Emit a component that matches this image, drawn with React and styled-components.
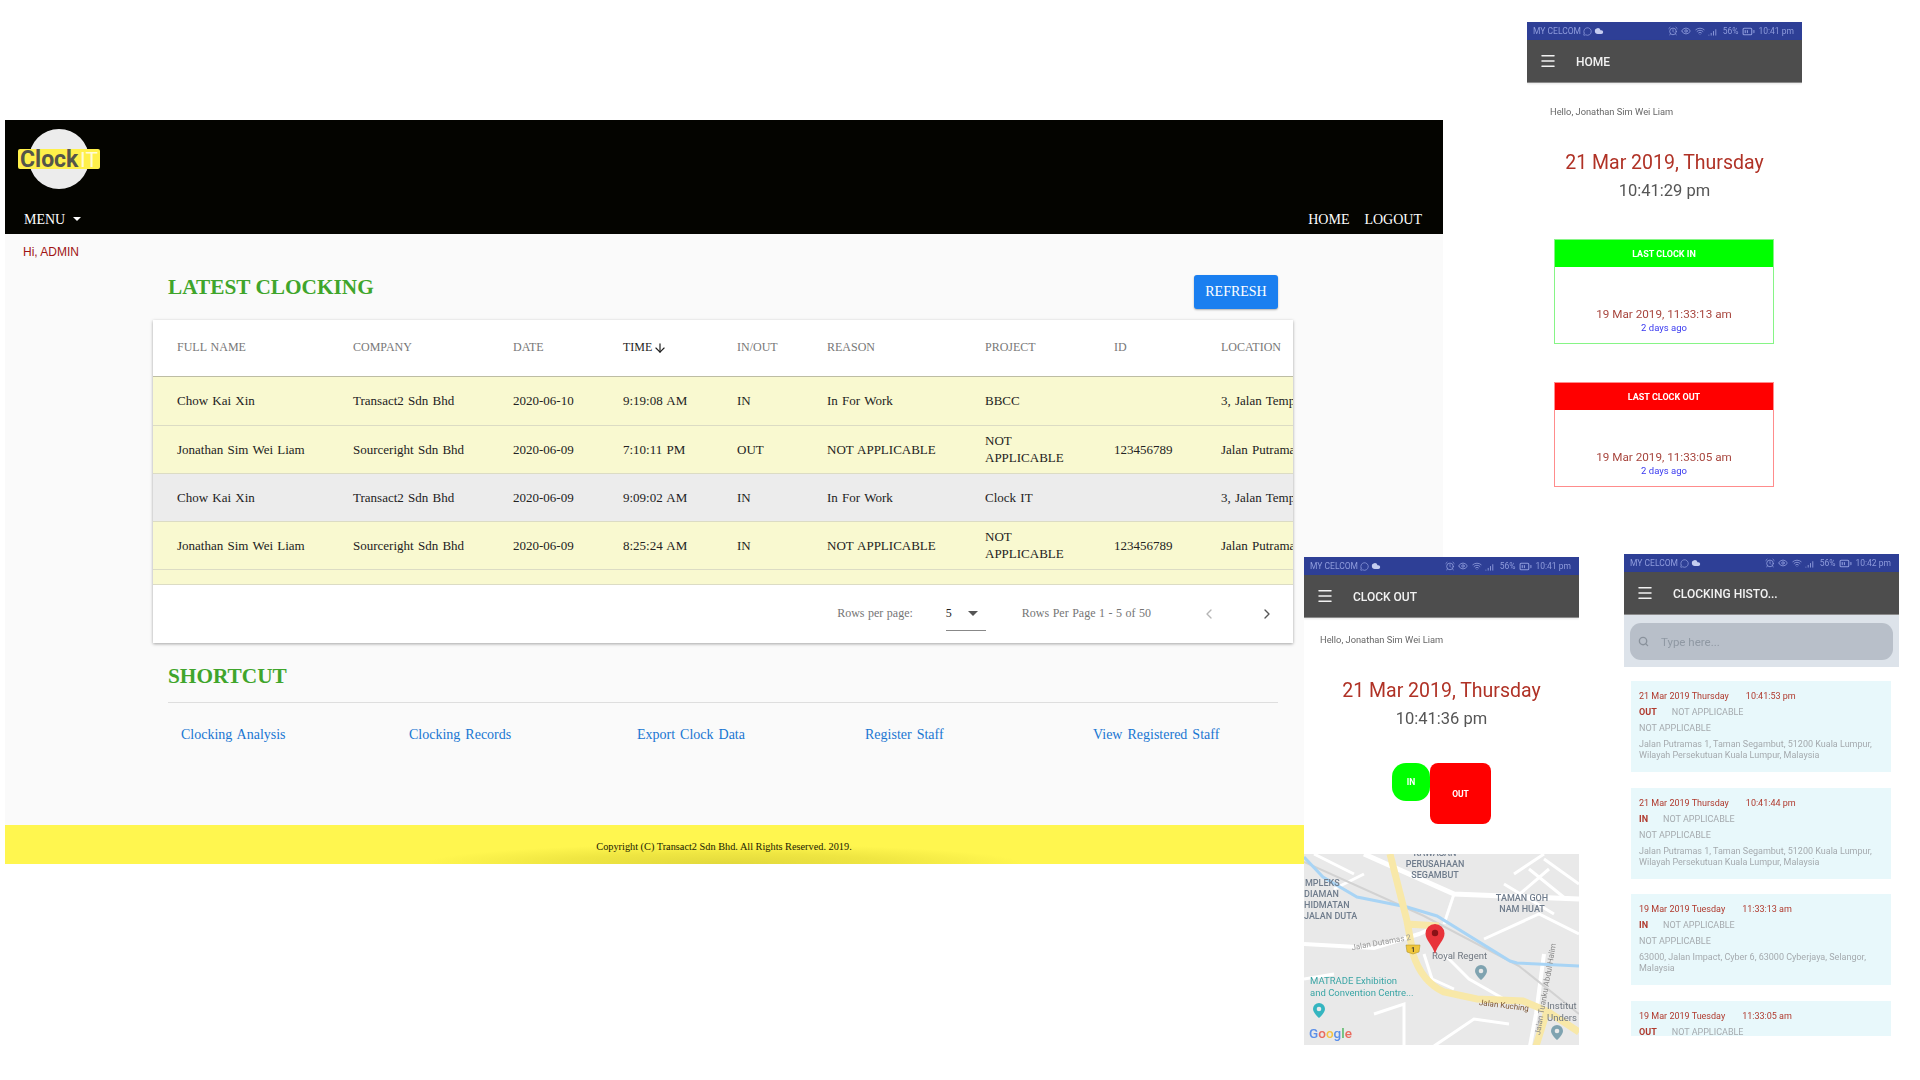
import React from "react";
import styled, { createGlobalStyle } from "styled-components";
import {
  AlarmClock,
  ArrowDown,
  BatteryMedium,
  ChevronLeft,
  ChevronRight,
  Cloud,
  Eye,
  Menu,
  MessageCircle,
  Search,
  SignalHigh,
  Wifi,
} from "lucide-react";

const GlobalStyle = createGlobalStyle`
  html, body {
    margin: 0;
    padding: 0;
    background: #fff;
  }
  body {
    width: 1920px;
    height: 1080px;
    overflow: hidden;
    font-family: "Liberation Serif", serif;
  }
`;

const Page = styled.div`
  position: relative;
  width: 1920px;
  height: 1080px;
  padding: 120px 0 0 5px;
  box-sizing: border-box;
  overflow: hidden;
`;
const Desktop = styled.div`
  width: 1438px;
`;
const Header = styled.header`
  height: 114px;
  background: #040400;
  color: #fff;
  display: flex;
  flex-direction: column;
  justify-content: space-between;
  box-sizing: border-box;
  padding: 9px 0 6px 13px;
`;
const NavRow = styled.nav`
  display: flex;
  justify-content: space-between;
  align-items: center;
  font-size: 14px;
  line-height: 16px;
  padding: 0 21px 0 6px;
`;
const MenuLabel = styled.span`
  display: flex;
  align-items: center;
  gap: 8px;
  &::after {
    content: "";
    border-left: 4px solid transparent;
    border-right: 4px solid transparent;
    border-top: 4px solid #fff;
    margin-top: -2px;
  }
`;
const NavLinks = styled.div`
  display: flex;
  gap: 15px;
`;
const Main = styled.main`
  height: 630px;
  background: #fafafa;
  box-sizing: border-box;
  padding-top: 11px;
  display: flex;
  flex-direction: column;
`;
const Greeting = styled.div`
  font: 12px/14px "Liberation Sans", sans-serif;
  color: #a01414;
  padding-left: 18px;
`;
const Content = styled.div`
  width: 1140px;
  margin: 16px 0 0 148px;
`;
const TitleRow = styled.div`
  display: flex;
  justify-content: space-between;
  align-items: flex-start;
  padding: 0 15px;
`;
const SectionTitle = styled.h2`
  margin: 0;
  font-size: 21.3px;
  line-height: 24px;
  font-weight: bold;
  color: #3fa52b;
`;
const RefreshButton = styled.button`
  width: 84px;
  height: 34px;
  border: none;
  border-radius: 3px;
  background: #1a7ff0;
  color: #fff;
  font: 14px "Liberation Serif", serif;
  box-shadow: 0 1px 2px rgba(0, 0, 0, 0.3);
`;
const TableCard = styled.section`
  margin-top: 11px;
  background: #fff;
  box-shadow: 0 1px 3px rgba(0, 0, 0, 0.35);
  overflow: hidden;
  word-spacing: 1px;
`;
const Table = styled.table`
  table-layout: fixed;
  width: 1300px;
  border-collapse: collapse;
`;
const HeadCell = styled.th`
  height: 56px;
  padding: 0 0 0 23px;
  text-align: left;
  font-size: 12px;
  font-weight: normal;
  color: ${(p) => (p.$active ? "#1d1d1d" : "#777")};
  border-bottom: 1px solid #bdbda4;
  white-space: nowrap;
  box-sizing: border-box;
  &:first-child {
    padding-left: 24px;
  }
`;
const SortWrap = styled.span`
  display: inline-flex;
  align-items: center;
  gap: 1px;
`;
const Row = styled.tr`
  height: ${(p) => p.$h}px;
  background: ${(p) => (p.$grey ? "#ececec" : "#f9f9d0")};
`;
const Cell = styled.td`
  padding: 0 24px 0 23px;
  font-size: 13px;
  line-height: 17px;
  color: #222;
  border-bottom: 1px solid #dcdcc4;
  white-space: ${(p) => (p.$wrap ? "normal" : "nowrap")};
  overflow: hidden;
  box-sizing: border-box;
  &:first-child {
    padding-left: 24px;
  }
`;
const EmptyCell = styled.td`
  padding: 0;
  border-bottom: 1px solid #dcdcc4;
`;
const Pager = styled.div`
  height: 58px;
  display: flex;
  align-items: center;
  justify-content: flex-end;
  padding: 0 18px 0 0;
  font-size: 12px;
  word-spacing: 0.5px;
  color: #757575;
`;
const PagerSelect = styled.div`
  width: 40px;
  height: 34px;
  margin: 0 36px 0 33px;
  box-sizing: border-box;
  border-bottom: 1px solid #888;
  display: flex;
  align-items: center;
  justify-content: space-between;
  padding: 0 8px 0 0;
  color: #222;
  &::after {
    content: "";
    border-left: 5px solid transparent;
    border-right: 5px solid transparent;
    border-top: 5px solid #555;
  }
`;
const PagerButton = styled.span`
  display: flex;
  margin-left: ${(p) => p.$gap}px;
  color: ${(p) => (p.$off ? "#b5b5b5" : "#555")};
`;
const ShortcutTitle = styled(SectionTitle)`
  margin-top: 20px;
  padding: 1px 15px;
`;
const Rule = styled.div`
  height: 1px;
  margin: 13px 15px 0;
  background: #dedede;
`;
const Shortcuts = styled.div`
  display: grid;
  grid-template-columns: repeat(5, 228px);
  margin: 23px 0 0 15px;
  word-spacing: 1.5px;
`;
const ShortcutLink = styled.a`
  padding-left: 13px;
  font-size: 14px;
  line-height: 18px;
  color: #1976d2;
`;
const Footer = styled.footer`
  height: 39px;
  flex: none;
  margin-top: auto;
  background: radial-gradient(ellipse 300px 20px at 50% 100%, #e2d93c 0%, #efe642 55%, #fff64f 100%);
  display: flex;
  align-items: center;
  justify-content: center;
  padding-top: 4px;
  box-sizing: border-box;
  font-size: 10.3px;
  color: #1a1a00;
`;

// phone screenshots sit on the page like loose windows
const Phone = styled.div`
  position: absolute;
  left: ${(p) => p.$x}px;
  top: ${(p) => p.$y}px;
  width: 275px;
  height: ${(p) => p.$h}px;
  background: #fff;
  overflow: hidden;
  font-family: Roboto, sans-serif;
  display: flex;
  flex-direction: column;
  filter: blur(0.4px);
`;
const StatusBar = styled.div`
  height: 18px;
  flex: none;
  background: #2e3f96;
  color: #8f9cdc;
  font-size: 8.5px;
  display: flex;
  align-items: center;
  justify-content: space-between;
  padding: 0 8px 0 6px;
`;
const StatusGroup = styled.span`
  display: flex;
  align-items: center;
  gap: ${(p) => p.$gap || 2}px;
  white-space: nowrap;
`;
const AppBar = styled.div`
  height: 42px;
  flex: none;
  background: #4d4d4d;
  border-bottom: 1px solid #8a8a8a;
  box-shadow: 0 1px 2px rgba(0, 0, 0, 0.1);
  color: #f2f2f2;
  display: flex;
  align-items: center;
  gap: 19px;
  padding-left: 12px;
  font-size: 12px;
  font-weight: 500;
`;
const BarTitle = styled.span`
  margin-top: 2px;
`;
const Hello = styled.div`
  margin: ${(p) => p.$top}px 0 0 ${(p) => p.$left}px;
  font-size: 9.3px;
  line-height: 12px;
  color: #666;
`;
const DateLine = styled.div`
  margin-top: 32px;
  text-align: center;
  font-size: 19.5px;
  line-height: 26px;
  color: #b03226;
`;
const TimeLine = styled.div`
  margin-top: 3px;
  text-align: center;
  font-size: 16.5px;
  line-height: 24px;
  color: #555;
`;
const LastCard = styled.div`
  width: 220px;
  height: 105px;
  margin: ${(p) => p.$top}px 0 0 27px;
  box-sizing: border-box;
  border: 1px solid ${(p) => (p.$in ? "#86f586" : "#ff8c8c")};
  display: flex;
  flex-direction: column;
  align-items: center;
  padding-bottom: 9px;
`;
const LastCardHead = styled.div`
  width: 100%;
  height: 27px;
  flex: none;
  background: ${(p) => (p.$in ? "#00ff00" : "#ff0000")};
  color: #fff;
  font-size: 9px;
  font-weight: 700;
  display: flex;
  align-items: center;
  justify-content: center;
`;
const LastCardDate = styled.div`
  margin-top: auto;
  font-size: 11.7px;
  line-height: 14px;
  color: #a8463e;
`;
const LastCardAgo = styled.div`
  font-size: 9.5px;
  line-height: 13px;
  color: #3a3af0;
`;
const ClockButtons = styled.div`
  margin: 32px 0 0 88px;
  display: flex;
  align-items: flex-start;
`;
const ClockButton = styled.div`
  width: ${(p) => (p.$in ? 38 : 61)}px;
  height: ${(p) => (p.$in ? 38 : 61)}px;
  border-radius: ${(p) => (p.$in ? 14 : 8)}px;
  background: ${(p) => (p.$in ? "#00ff00" : "#ff0000")};
  color: #fff;
  font-size: 8.5px;
  font-weight: 700;
  display: flex;
  align-items: center;
  justify-content: center;
`;
const MapBox = styled.svg`
  display: block;
  margin-top: 30px;
  flex: none;
`;
const SearchBand = styled.div`
  height: 52px;
  flex: none;
  background: #dde3ea;
  box-sizing: border-box;
  padding: 8px 6px 7px;
`;
const SearchBox = styled.div`
  height: 37px;
  border-radius: 11px;
  background: #b8bfc9;
  color: #8f98a3;
  display: flex;
  align-items: center;
  gap: 12px;
  padding-left: 8px;
  font-size: 11.5px;
`;
const HistoryList = styled.div`
  display: flex;
  flex-direction: column;
  gap: 15.5px;
  margin: 14px 8px 0 7px;
`;
const HistoryCard = styled.div`
  height: 91px;
  flex: none;
  box-sizing: border-box;
  padding: 7px 8px 0;
  background: #e8f8fb;
  font-size: 9px;
  line-height: 16px;
  color: #a5aaae;
`;
const HistoryDate = styled.div`
  display: flex;
  gap: 17px;
  color: #b03a2e;
`;
const HistoryType = styled.div`
  display: flex;
  gap: 15px;
  b {
    color: #b03a2e;
    font-weight: 700;
  }
`;
const HistoryAddress = styled.div`
  margin-top: 3px;
  line-height: 11px;
`;

const columns = [177, 160, 110, 114, 90, 158, 129, 107, 255];
const headings = ["FULL NAME", "COMPANY", "DATE", "TIME", "IN/OUT", "REASON", "PROJECT", "ID", "LOCATION"];
const rows = [
  { h: 49, cells: ["Chow Kai Xin", "Transact2 Sdn Bhd", "2020-06-10", "9:19:08 AM", "IN", "In For Work", "BBCC", "", "3, Jalan Templer"] },
  { h: 48, cells: ["Jonathan Sim Wei Liam", "Sourceright Sdn Bhd", "2020-06-09", "7:10:11 PM", "OUT", "NOT APPLICABLE", "NOT APPLICABLE", "123456789", "Jalan Putramas 1"] },
  { h: 48, grey: true, cells: ["Chow Kai Xin", "Transact2 Sdn Bhd", "2020-06-09", "9:09:02 AM", "IN", "In For Work", "Clock IT", "", "3, Jalan Templer"] },
  { h: 48, cells: ["Jonathan Sim Wei Liam", "Sourceright Sdn Bhd", "2020-06-09", "8:25:24 AM", "IN", "NOT APPLICABLE", "NOT APPLICABLE", "123456789", "Jalan Putramas 1"] },
];
const shortcuts = ["Clocking Analysis", "Clocking Records", "Export Clock Data", "Register Staff", "View Registered Staff"];
const putramas = ["Jalan Putramas 1, Taman Segambut, 51200 Kuala Lumpur,", "Wilayah Persekutuan Kuala Lumpur, Malaysia"];
const history = [
  { date: "21 Mar 2019 Thursday", time: "10:41:53 pm", type: "OUT", address: putramas },
  { date: "21 Mar 2019 Thursday", time: "10:41:44 pm", type: "IN", address: putramas },
  { date: "19 Mar 2019 Tuesday", time: "11:33:13 am", type: "IN", address: ["63000, Jalan Impact, Cyber 6, 63000 Cyberjaya, Selangor,", "Malaysia"] },
  { date: "19 Mar 2019 Tuesday", time: "11:33:05 am", type: "OUT", address: [] },
];

const Logo = () => (
  <svg width="84" height="60" viewBox="0 0 84 60">
    <circle cx="41" cy="30" r="30" fill="#ececec" />
    <rect x="0" y="20" width="82" height="20" rx="2" fill="#fff04a" />
    <text x="2" y="38" fontFamily="Roboto, sans-serif" fontWeight="700" fontSize="23" fill="#55554a">Clock</text>
    <text x="62" y="38" fontFamily="Roboto, sans-serif" fontWeight="400" fontSize="21" fill="#fffbd8">IT</text>
  </svg>
);

const Status = ({ time }) => (
  <StatusBar>
    <StatusGroup>
      MY CELCOM
      <MessageCircle size={9} />
      <Cloud size={10} fill="#c5cdf0" strokeWidth={0} />
    </StatusGroup>
    <StatusGroup $gap={3.5}>
      <AlarmClock size={10} />
      <Eye size={10} />
      <Wifi size={10} />
      <SignalHigh size={11} />
      56%
      <BatteryMedium size={13} />
      {time}
    </StatusGroup>
  </StatusBar>
);

const Bar = ({ title }) => (
  <AppBar>
    <Menu size={18} strokeWidth={2} />
    <BarTitle>{title}</BarTitle>
  </AppBar>
);

const MapPicture = () => (
  <MapBox width="275" height="192" viewBox="0 0 275 192">
    <rect width="275" height="192" fill="#e9e9e9" />
    <g fill="none" stroke="#fff" strokeWidth="3">
      <path d="M60 0 L150 40 L275 45" strokeWidth="5" />
      <path d="M0 90 L70 94 L115 80 L133 72" strokeWidth="4" />
      <path d="M210 20 L240 0 M200 30 L250 60 M225 15 L262 45 M240 5 L275 30 M210 45 L245 15" />
      <path d="M180 85 L235 60 L275 80" />
      <path d="M240 100 L232 160 L226 192" strokeWidth="4" />
      <path d="M120 100 L128 125 L150 135 M140 100 L165 125 L200 145" />
      <path d="M0 125 L30 120 M70 160 L100 150 L100 192 M130 192 L170 165 L205 170" />
      <path d="M10 0 L50 20 M30 35 L60 20 M150 40 L140 70" />
    </g>
    <path d="M0 8 L120 62 L215 112 L275 160" fill="none" stroke="#d2d2d2" strokeWidth="2" />
    <path d="M0 3 L19 23 L53 43 L103 53 L133 62 L206 107 L213 109 L275 112" fill="none" stroke="#a8d4f5" strokeWidth="3" />
    <path d="M86 0 L103 67 L109 100 Q118 128 140 138 L173 145 L219 147 L243 157 L275 178 M103 70 L135 72 M243 157 L232 192" fill="none" stroke="#f8e8a8" strokeWidth="7" />
    <g fontFamily="Roboto, sans-serif" fontSize="9" fontWeight="500" fill="#6f7c8c">
      <text x="131" y="2" textAnchor="middle">KAWASAN</text>
      <text x="131" y="13" textAnchor="middle">PERUSAHAAN</text>
      <text x="131" y="24" textAnchor="middle">SEGAMBUT</text>
      <text x="218" y="47" textAnchor="middle">TAMAN GOH</text>
      <text x="218" y="58" textAnchor="middle">NAM HUAT</text>
      <text x="1" y="32">MPLEKS</text>
      <text x="0" y="43">DIAMAN</text>
      <text x="0" y="54">HIDMATAN</text>
      <text x="0" y="65">JALAN DUTA</text>
    </g>
    <g fontFamily="Roboto, sans-serif" fontSize="8">
      <text x="77" y="91" textAnchor="middle" fill="#999" transform="rotate(-10 77 88)">Jalan Dutamas 2</text>
      <text x="241" y="138" textAnchor="middle" fill="#888" transform="rotate(-80 241 135)">Jalan Tuanku Abdul Halim</text>
      <text x="200" y="154" textAnchor="middle" fill="#7a5230" transform="rotate(7 200 151)">Jalan Kuching</text>
    </g>
    <g fontFamily="Roboto, sans-serif" fontSize="9.5">
      <text x="128" y="105" fill="#6f7780">Royal Regent</text>
      <text x="243" y="155" fill="#6f7780">Institut</text>
      <text x="243" y="167" fill="#6f7780">Unders</text>
      <text x="6" y="130" fill="#3aa5a5">MATRADE Exhibition</text>
      <text x="6" y="142" fill="#3aa5a5">and Convention Centre...</text>
    </g>
    <path d="M102 91 L116 91 L115 98 L109 100 L103 98 Z" fill="#f0c63c" stroke="#a58a20" strokeWidth="0.5" />
    <text x="109" y="98" textAnchor="middle" fontFamily="Roboto, sans-serif" fontSize="6.5" fontWeight="700" fill="#333">1</text>
    <path d="M177 111 a6 6 0 0 1 6 6 c0 4 -6 9 -6 9 s-6 -5 -6 -9 a6 6 0 0 1 6 -6 Z" fill="#7fa3b0" />
    <circle cx="177" cy="117" r="2.3" fill="#e9e9e9" />
    <path d="M253 171 a6 6 0 0 1 6 6 c0 4 -6 9 -6 9 s-6 -5 -6 -9 a6 6 0 0 1 6 -6 Z" fill="#7fa3b0" />
    <circle cx="253" cy="177" r="2.3" fill="#e9e9e9" />
    <path d="M15 149 a6 6 0 0 1 6 6 c0 4 -6 9 -6 9 s-6 -5 -6 -9 a6 6 0 0 1 6 -6 Z" fill="#35b5c0" />
    <circle cx="15" cy="155" r="2.3" fill="#e9e9e9" />
    <path d="M131 70 a9.5 9.5 0 0 1 9.5 9.5 c0 7 -7 11 -9.5 20.5 c-2.5 -9.5 -9.5 -13.5 -9.5 -20.5 a9.5 9.5 0 0 1 9.5 -9.5 Z" fill="#e8333a" />
    <circle cx="131" cy="79" r="3.2" fill="#8a1216" />
    <text x="5" y="184" fontFamily="Roboto, sans-serif" fontSize="13.5" fontWeight="500">
      <tspan fill="#5b8fe8">G</tspan>
      <tspan fill="#ea6a5e">o</tspan>
      <tspan fill="#f3c344">o</tspan>
      <tspan fill="#5b8fe8">g</tspan>
      <tspan fill="#5fbb6e">l</tspan>
      <tspan fill="#ea6a5e">e</tspan>
    </text>
  </MapBox>
);

export default function App() {
  return (
    <Page>
      <GlobalStyle />
      <Desktop>
        <Header>
          <Logo />
          <NavRow>
            <MenuLabel>MENU</MenuLabel>
            <NavLinks>
              <span>HOME</span>
              <span>LOGOUT</span>
            </NavLinks>
          </NavRow>
        </Header>
        <Main>
          <Greeting>Hi, ADMIN</Greeting>
          <Content>
            <TitleRow>
              <SectionTitle>LATEST CLOCKING</SectionTitle>
              <RefreshButton>REFRESH</RefreshButton>
            </TitleRow>
            <TableCard>
              <Table>
                <colgroup>
                  {columns.map((w, i) => (
                    <col key={i} width={w} />
                  ))}
                </colgroup>
                <thead>
                  <tr>
                    {headings.map((h) => (
                      <HeadCell key={h} $active={h === "TIME"}>
                        {h === "TIME" ? (
                          <SortWrap>
                            TIME
                            <ArrowDown size={14} />
                          </SortWrap>
                        ) : (
                          h
                        )}
                      </HeadCell>
                    ))}
                  </tr>
                </thead>
                <tbody>
                  {rows.map((r, i) => (
                    <Row key={i} $h={r.h} $grey={r.grey}>
                      {r.cells.map((c, j) => (
                        <Cell key={j} $wrap={j === 6}>
                          {c}
                        </Cell>
                      ))}
                    </Row>
                  ))}
                  <Row $h={15}>
                    <EmptyCell colSpan={9} />
                  </Row>
                </tbody>
              </Table>
              <Pager>
                <span>Rows per page:</span>
                <PagerSelect>5</PagerSelect>
                <span>Rows Per Page 1 - 5 of 50</span>
                <PagerButton $gap={50} $off>
                  <ChevronLeft size={16} />
                </PagerButton>
                <PagerButton $gap={42}>
                  <ChevronRight size={16} />
                </PagerButton>
              </Pager>
            </TableCard>
            <ShortcutTitle>SHORTCUT</ShortcutTitle>
            <Rule />
            <Shortcuts>
              {shortcuts.map((s) => (
                <ShortcutLink key={s}>{s}</ShortcutLink>
              ))}
            </Shortcuts>
          </Content>
          <Footer>Copyright (C) Transact2 Sdn Bhd. All Rights Reserved. 2019.</Footer>
        </Main>
      </Desktop>

      <Phone $x={1527} $y={22} $h={480}>
        <Status time="10:41 pm" />
        <Bar title="HOME" />
        <Hello $top={23} $left={23}>Hello, Jonathan Sim Wei Liam</Hello>
        <DateLine>21 Mar 2019, Thursday</DateLine>
        <TimeLine>10:41:29 pm</TimeLine>
        <LastCard $in $top={36}>
          <LastCardHead $in>LAST CLOCK IN</LastCardHead>
          <LastCardDate>19 Mar 2019, 11:33:13 am</LastCardDate>
          <LastCardAgo>2 days ago</LastCardAgo>
        </LastCard>
        <LastCard $top={38}>
          <LastCardHead>LAST CLOCK OUT</LastCardHead>
          <LastCardDate>19 Mar 2019, 11:33:05 am</LastCardDate>
          <LastCardAgo>2 days ago</LastCardAgo>
        </LastCard>
      </Phone>

      <Phone $x={1304} $y={557} $h={488}>
        <Status time="10:41 pm" />
        <Bar title="CLOCK OUT" />
        <Hello $top={16} $left={16}>Hello, Jonathan Sim Wei Liam</Hello>
        <DateLine>21 Mar 2019, Thursday</DateLine>
        <TimeLine>10:41:36 pm</TimeLine>
        <ClockButtons>
          <ClockButton $in>IN</ClockButton>
          <ClockButton>OUT</ClockButton>
        </ClockButtons>
        <MapPicture />
      </Phone>

      <Phone $x={1624} $y={554} $h={482}>
        <Status time="10:42 pm" />
        <Bar title="CLOCKING HISTO..." />
        <SearchBand>
          <SearchBox>
            <Search size={11} strokeWidth={3} color="#8a929c" />
            Type here...
          </SearchBox>
        </SearchBand>
        <HistoryList>
          {history.map((h, i) => (
            <HistoryCard key={i}>
              <HistoryDate>
                <span>{h.date}</span>
                <span>{h.time}</span>
              </HistoryDate>
              <HistoryType>
                <b>{h.type}</b>
                <span>NOT APPLICABLE</span>
              </HistoryType>
              <div>NOT APPLICABLE</div>
              <HistoryAddress>
                {h.address.map((a) => (
                  <div key={a}>{a}</div>
                ))}
              </HistoryAddress>
            </HistoryCard>
          ))}
        </HistoryList>
      </Phone>
    </Page>
  );
}
